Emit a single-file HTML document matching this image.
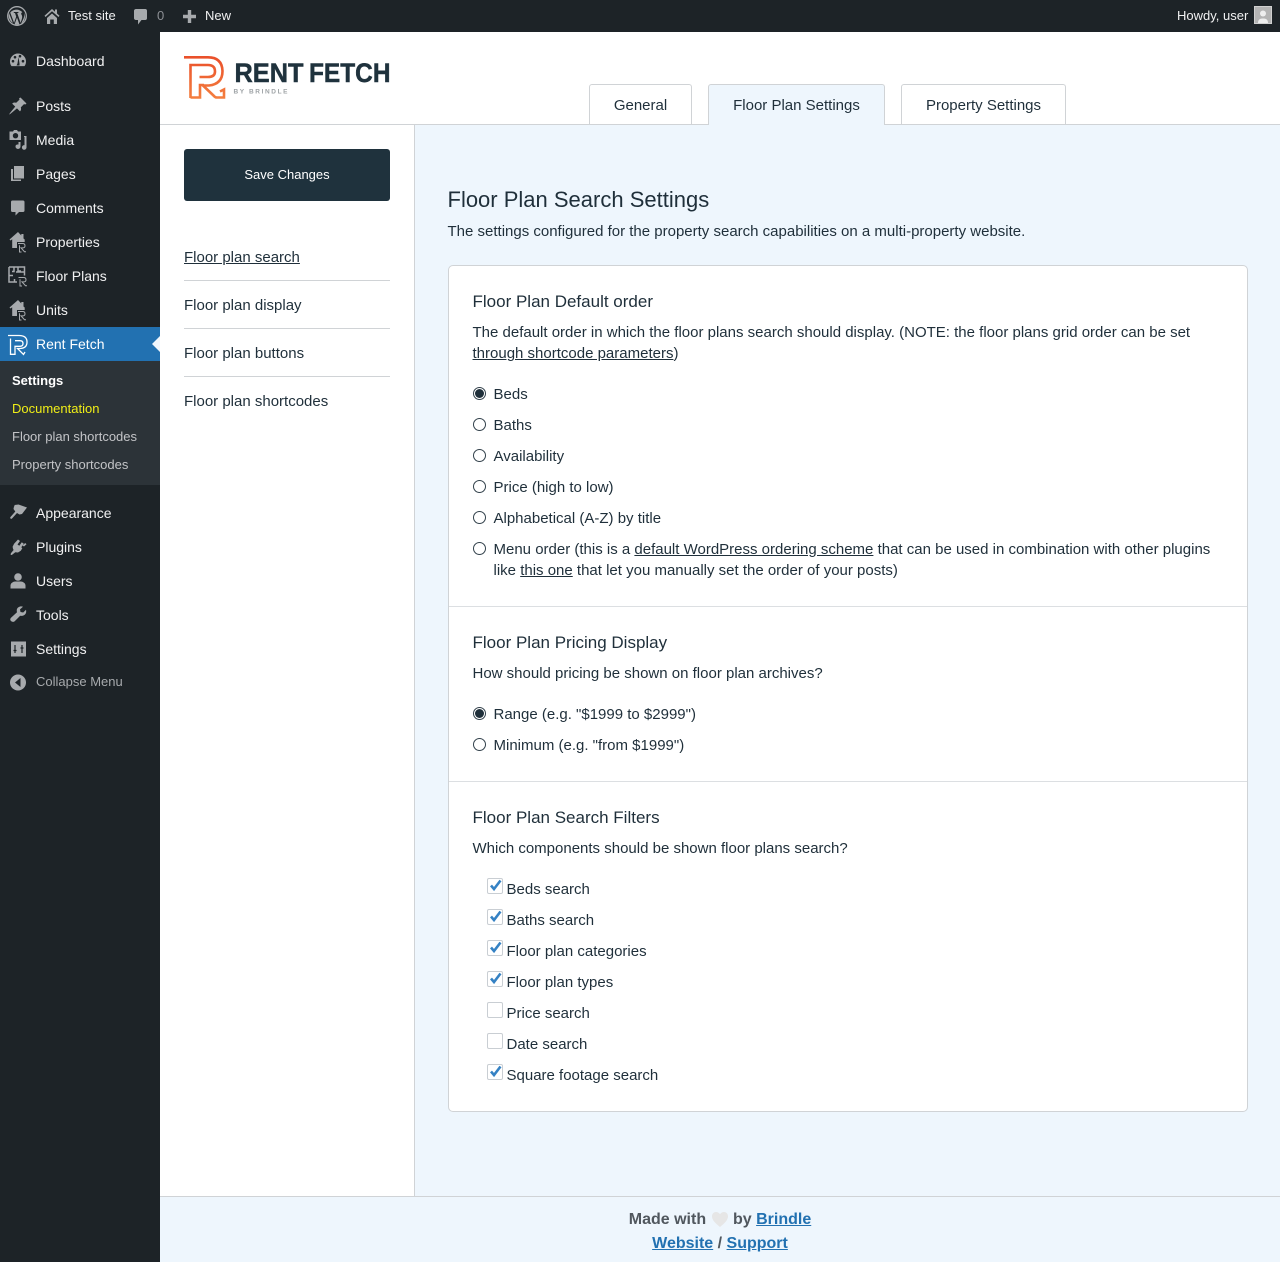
<!DOCTYPE html>
<html><head><meta charset="utf-8"><title>Rent Fetch</title>
<style>
*{box-sizing:border-box}
html,body{margin:0;padding:0}
body{width:1280px;height:1262px;position:relative;overflow:hidden;background:#eef6fd;font-family:"Liberation Sans",sans-serif;color:#1f2f3a}
a{color:inherit}
.t{position:absolute;white-space:nowrap;line-height:20px;height:20px}
.b{position:absolute}
.m{font-size:14px;color:#f0f0f1;left:36px}
.s{font-size:13px;left:12px;color:#c3c4c7}
.a{font-size:13px;color:#f0f0f1}
.c{font-size:15px;margin-top:1px;margin-left:-.5px}
.h{font-size:17px;margin-left:-.5px}
.nav{font-size:15px;left:184px;margin-top:1px}
.r{position:absolute;left:473px;width:13px;height:13px;border:1px solid #33424c;border-radius:50%;background:#fff}
.r.on::after{content:"";position:absolute;left:1px;top:1px;width:9px;height:9px;border-radius:50%;background:#1f2f3a}
.k{position:absolute;left:487px;width:16px;height:16px;border:1px solid #c9ced3;border-radius:2px;background:#fff}
.k svg{position:absolute;left:0;top:-1px}
.i{position:absolute;left:0;top:0}
.tab{position:absolute;top:84px;height:40px;border:1px solid #d0d3d6;border-bottom:0;border-radius:3px 3px 0 0;background:#fff;font-size:15px;line-height:41px;text-align:center;color:#1f2f3a}
</style></head><body>

<!-- main white regions -->
<div class="b" style="left:160px;top:32px;width:1120px;height:92px;background:#fff"></div>
<div class="b" style="left:160px;top:124px;width:1120px;height:1px;background:#d0d3d6"></div>
<div class="b" style="left:160px;top:125px;width:255px;height:1071px;background:#fff;border-right:1px solid #d0d3d6"></div>
<div class="b" style="left:160px;top:1196px;width:1120px;height:1px;background:#d0d3d6"></div>

<!-- sidebar + bars -->
<div class="b" style="left:0;top:0;width:1280px;height:32px;background:#1d2327"></div>
<div class="b" style="left:0;top:32px;width:160px;height:1230px;background:#1d2327"></div>
<div class="b" style="left:0;top:327px;width:160px;height:34px;background:#2271b1"></div>
<div class="b" style="left:0;top:361px;width:160px;height:124px;background:#2c3338"></div>
<div class="b" style="left:152px;top:336px;width:0;height:0;border:8px solid transparent;border-left:0;border-right-color:#f0f6fc"></div>

<svg class="i" width="160" height="700" viewBox="0 0 160 700" fill="#a7aaad">
 <!-- WP logo -->
 <circle cx="17" cy="16" r="9.3" fill="none" stroke="#a7aaad" stroke-width="1.3"/>
 <path d="M10.2 12.5l3.9 10.4 2.1-6.300-1.200-3.600h-1.200v-1h4.600v1h-1.200l3.400 9.900 1.200-3.800c.7-2.200.4-3.400-.4-4.600-.5-.8-.2-2 1-2.200-1.600-1.700-3.700-2.700-5.600-2.700-3 0-5.300 1.100-6.900 3.400z M17 17.500l-2.400 6.800c1.500.5 3.200.5 4.800 0z M24 12.500c.6 2.300.3 4.200-.6 6.300l-2.300 5c2.800-1.700 4.500-4.800 3.600-9z M9 13c-1 3.600.5 8 3.900 10z"/>
 <!-- home -->
 <path d="M52 9l-7.500 6.800 1 1.200 6.500-5.800 6.500 5.800 1-1.200-2.500-2.300V9.500h-2v2.200z"/>
 <path d="M52 13.500l-5 4.500v6h3.200v-4.500h3.600V24H57v-6z"/>
 <!-- comment topbar -->
 <path d="M136 9h9.300c1 0 1.700.7 1.700 1.700v7.600c0 1-.7 1.700-1.700 1.700h-3.800l-3.500 4.500V20H136c-1 0-2-.7-2-1.700v-7.600C134 9.700 135 9 136 9z"/>
 <!-- dashboard -->
 <path d="M18 53.500a8 8 0 0 0-8 8c0 1.700.5 3.300 1.500 4.600h13c1-1.300 1.500-2.900 1.500-4.600a8 8 0 0 0-8-8zM13 62.500a1.300 1.300 0 1 1 0-2.600 1.300 1.300 0 0 1 0 2.600zm2-4a1.300 1.300 0 1 1 0-2.600 1.300 1.300 0 0 1 0 2.600zm4.500 7h-3l1-2 1-6.500 1 6.500zm.5-8a1.300 1.300 0 1 1 0-2.600 1.300 1.300 0 0 1 0 2.600zm3 5a1.300 1.300 0 1 1 0-2.600 1.300 1.300 0 0 1 0 2.600z" fill-rule="evenodd"/>
 <!-- posts pin -->
 <path d="M20.500 97.500l6 6-1.200 1-1.300-.4-3.200 3.300c.6 1.700.2 3-.8 4l-3-3-6.500 5.300-1.500.9.900-1.500 5.300-6.500-3-3c1-1 2.300-1.400 4-.8l3.300-3.200-.4-1.300z"/>
 <!-- media -->
 <path d="M11 131.500h2l1-1.500h3l1 1.500h3v8.500H9.500v-8.500zM15.500 133a2.700 2.700 0 1 0 0 5.400 2.700 2.700 0 0 0 0-5.400z M24 137v-1h2.500v11.500a2.300 2.300 0 1 1-2-2.300V137zM15.500 146.500a2 2 0 0 1 1.800-2h1.200v-2.500h2v4.500a2.400 2.400 0 0 1-5 0z" fill-rule="evenodd"/>
 <!-- pages -->
 <path d="M14 166h10v12.500H14z M11 169h2v10.500h8v1.500H11z"/>
 <!-- comments -->
 <path d="M12.500 200.500h10.500c1 0 1.500.7 1.500 1.500v8.500c0 1-.6 1.500-1.500 1.500h-4l-3.500 3.500v-3.500h-3c-1 0-1.500-.6-1.500-1.500V202c0-.9.600-1.500 1.500-1.500z"/>
 <!-- properties -->
 <path d="M18 232l-8.500 7.500 1 1 1.700-1.300V248h6.800v-5h5.700v-3.500l-1.200-1V234h-2.200v1.500z"/>
 <rect x="17" y="242" width="11" height="11" fill="#1d2327"/>
 <path d="M18 243.500h4.500q2.500 0 2.500 2.200t-2.500 2.200h-1.500l3.500 3.800h1.500M19.500 245.300v6.700h2" fill="none" stroke="#a7aaad" stroke-width="1"/>
 <!-- floor plans -->
 <path d="M9 267h15.500v8.500M9 267v15h8M14 267v4.500h-2M18 267v4h3M9 275.500h4M14.500 282v-3M16 272h8" fill="none" stroke="#a7aaad" stroke-width="1.500"/>
 <rect x="18" y="276" width="11" height="11" fill="#1d2327"/>
 <path d="M18.500 277.500h5q2.500 0 2.500 2.200t-2.500 2.200h-1.500l3.500 3.800h1.500M20 279.300v6.700h2" fill="none" stroke="#a7aaad" stroke-width="1"/>
 <!-- units -->
 <path d="M18 300l-8.500 7.500 1 1 1.700-1.300V316h6.800v-5h5.700v-3.500l-1.200-1V302h-2.200v1.500z"/>
 <rect x="17" y="310" width="11" height="11" fill="#1d2327"/>
 <path d="M18 311.500h4.500q2.500 0 2.500 2.200t-2.500 2.200h-1.500l3.500 3.800h1.500M19.500 313.300v6.700h2" fill="none" stroke="#a7aaad" stroke-width="1"/>
 <!-- rent fetch -->
 <path d="M8 335.500h11q8 0 8 6.500t-7.500 6.500h-2l6 6 1.500-2.500M10.500 338.500v15.800h4.500v-8h5q3 0 3-2.800t-3-2.800h-5" fill="none" stroke="#fff" stroke-width="1.300"/>
 <!-- appearance -->
 <path d="M14.500 505l4-.5 8.500 3-5 6.500-2.500.5-2.500-1.500-5 5.500c-1 1-2.500-.5-1.500-1.500l4.800-5.500-1.800-2.500.5-2.500 .5-.5z"/>
 <!-- plugins -->
 <path d="M18 539.500l2 1.500-2.500 3.500 1.800 1.300 2.500-3.500 2 1.500-2.500 3.500 1 1-1.500 2.500-2.800 1.700-2.700-.2-3.500 2.700-1.200-.2.300-1.500 2.700-3.300-.6-1.200-.4-2 1.500-3z"/>
 <path d="M24 546.500l-1.500-1 2.700-2.500 1.300 1.200z"/>
 <!-- users -->
 <circle cx="18" cy="577" r="3.800"/>
 <path d="M10.500 588.500v-3c0-2.500 3-4 4.500-4h6c1.500 0 4.500 1.500 4.500 4v3z"/>
 <!-- tools -->
 <path d="M11 621c-1.300-1.300-.6-2.700 0-3.300l6-5.500c-.6-2.500 0-4.100 1.500-5 1.200-.8 3-1 4.500-.5l-3 2.700.5 2.600 2.700.5 2.800-2.800c.4 1.600.2 3.400-.8 4.600-1 1.300-3 2-5 1.400l-5.500 5.500c-1 .9-2.500.9-3.700-.2z"/>
 <!-- settings -->
 <path d="M11 641.500h15v15H11z"/>
 <path d="M15 645v8M22 645v8M13.500 650.500h3M20.500 648h3" fill="none" stroke="#1d2327" stroke-width="1.200"/>
 <!-- collapse -->
 <circle cx="18" cy="682.500" r="8"/>
 <path d="M20.500 678v9l-5.500-4.500z" fill="#1d2327"/>
</svg>

<!-- top bar plus -->
<svg class="b" style="left:180px;top:7px" width="20" height="18"><path d="M7.800 3h3.400v4.800H16v3.400h-4.800V16H7.800v-4.800H3V7.800h4.800z" fill="#a7aaad"/></svg>

<div class="t a" style="left:68px;top:6px">Test site</div>
<div class="t a" style="left:157px;top:6px;color:#8c8f94">0</div>
<div class="t a" style="left:205px;top:6px">New</div>
<div class="t a" style="left:1177px;top:6px">Howdy, user</div>
<div class="b" style="left:1254px;top:6px;width:18px;height:18px;background:#b4b4b4;border:1px solid #d0d0d0">
 <svg width="16" height="16" style="display:block"><circle cx="8" cy="6.500" r="3" fill="#eee"/><path d="M3 16c0-4 2.500-4.500 5-4.500s5 .5 5 4.500z" fill="#eee"/></svg>
</div>

<div class="t m" style="top:51px">Dashboard</div>
<div class="t m" style="top:96px">Posts</div>
<div class="t m" style="top:130px">Media</div>
<div class="t m" style="top:164px">Pages</div>
<div class="t m" style="top:198px">Comments</div>
<div class="t m" style="top:232px">Properties</div>
<div class="t m" style="top:266px">Floor Plans</div>
<div class="t m" style="top:300px">Units</div>
<div class="t m" style="top:334px;color:#fff">Rent Fetch</div>
<div class="t s" style="top:371px;color:#fff;font-weight:700">Settings</div>
<div class="t s" style="top:399px;color:#f0ee17">Documentation</div>
<div class="t s" style="top:427px">Floor plan shortcodes</div>
<div class="t s" style="top:455px">Property shortcodes</div>
<div class="t m" style="top:503px">Appearance</div>
<div class="t m" style="top:537px">Plugins</div>
<div class="t m" style="top:571px">Users</div>
<div class="t m" style="top:605px">Tools</div>
<div class="t m" style="top:639px">Settings</div>
<div class="t" style="left:36px;top:672px;font-size:13px;color:#a7aaad">Collapse Menu</div>

<!-- logo -->
<svg class="b" style="left:180px;top:50px" width="220" height="55" viewBox="180 50 220 55">
 <defs><linearGradient id="g" gradientUnits="userSpaceOnUse" x1="0" y1="56" x2="0" y2="99"><stop offset="0" stop-color="#ea4f2a"/><stop offset="1" stop-color="#f47f3f"/></linearGradient></defs>
 <g fill="none" stroke="url(#g)" stroke-width="2.600">
 <path d="M184 57.300H208Q222 57.300 222.500 71Q222.500 84 209 85.500H203L214 96Q215 97.500 217 97.500H224V89.500L220 91.500"/>
 <path d="M190.500 98V65H208Q215 65 215 71.500Q215 77 208 77H199.500"/>
 <path d="M190.500 97.500H200V85H204"/>
 </g>
 <text x="234.500" y="82" font-family="Liberation Sans" font-weight="700" font-size="27" fill="#1f323d" stroke="#1f323d" stroke-width=".5" textLength="69" lengthAdjust="spacingAndGlyphs">RENT</text>
 <text x="309" y="82" font-family="Liberation Sans" font-weight="700" font-size="27" fill="#1f323d" stroke="#1f323d" stroke-width=".5" textLength="81.500" lengthAdjust="spacingAndGlyphs">FETCH</text>
 <text x="233.500" y="93.500" font-family="Liberation Sans" font-weight="700" font-size="6.500" fill="#9ea3a6" textLength="54" lengthAdjust="spacing">BY BRINDLE</text>
</svg>

<!-- tabs -->
<div class="tab" style="left:589px;width:103px">General</div>
<div class="tab" style="left:708px;width:177px;height:41px;background:#eef6fd">Floor Plan Settings</div>
<div class="tab" style="left:901px;width:165px">Property Settings</div>

<!-- left nav -->
<div class="b" style="left:184px;top:149px;width:206px;height:52px;background:#1f323d;border-radius:3px;color:#fff;font-size:13px;line-height:52px;text-align:center">Save Changes</div>
<div class="t nav" style="top:247px"><a href="#" style="text-decoration:underline">Floor plan search</a></div>
<div class="b" style="left:184px;top:280px;width:206px;height:1px;background:#d0d3d6"></div>
<div class="t nav" style="top:295px">Floor plan display</div>
<div class="b" style="left:184px;top:328px;width:206px;height:1px;background:#d0d3d6"></div>
<div class="t nav" style="top:343px">Floor plan buttons</div>
<div class="b" style="left:184px;top:376px;width:206px;height:1px;background:#d0d3d6"></div>
<div class="t nav" style="top:391px">Floor plan shortcodes</div>

<!-- heading -->
<div class="t" style="left:447.500px;top:190px;font-size:22px">Floor Plan Search Settings</div>
<div class="t c" style="left:448px;top:221px">The settings configured for the property search capabilities on a multi-property website.</div>

<!-- card -->
<div class="b" style="left:448px;top:265px;width:800px;height:847px;background:#fff;border:1px solid #d0d3d6;border-radius:5px"></div>
<div class="b" style="left:449px;top:606px;width:798px;height:1px;background:#dcdfe2"></div>
<div class="b" style="left:449px;top:781px;width:798px;height:1px;background:#dcdfe2"></div>

<div class="t h" style="left:473px;top:292px">Floor Plan Default order</div>
<div class="t c" style="left:473px;top:322px">The default order in which the floor plans search should display. (NOTE: the floor plans grid order can be set</div>
<div class="t c" style="left:473px;top:343px"><a href="#" style="text-decoration:underline">through shortcode parameters</a>)</div>

<span class="r on" style="top:387px"></span><div class="t c" style="left:494px;top:384px">Beds</div>
<span class="r" style="top:418px"></span><div class="t c" style="left:494px;top:415px">Baths</div>
<span class="r" style="top:449px"></span><div class="t c" style="left:494px;top:446px">Availability</div>
<span class="r" style="top:480px"></span><div class="t c" style="left:494px;top:477px">Price (high to low)</div>
<span class="r" style="top:511px"></span><div class="t c" style="left:494px;top:508px">Alphabetical (A-Z) by title</div>
<span class="r" style="top:542px"></span><div class="t c" style="left:494px;top:539px">Menu order (this is a <a href="#">default WordPress ordering scheme</a> that can be used in combination with other plugins</div>
<div class="t c" style="left:494px;top:560px">like <a href="#">this one</a> that let you manually set the order of your posts)</div>

<div class="t h" style="left:473px;top:633px">Floor Plan Pricing Display</div>
<div class="t c" style="left:473px;top:663px">How should pricing be shown on floor plan archives?</div>
<span class="r on" style="top:707px"></span><div class="t c" style="left:494px;top:704px">Range (e.g. "$1999 to $2999")</div>
<span class="r" style="top:738px"></span><div class="t c" style="left:494px;top:735px">Minimum (e.g. "from $1999")</div>

<div class="t h" style="left:473px;top:808px">Floor Plan Search Filters</div>
<div class="t c" style="left:473px;top:838px">Which components should be shown floor plans search?</div>

<span class="k" style="top:878px"><svg width="16" height="16"><path d="M3 7.500l3 3.500L12.500 2.500" fill="none" stroke="#3582c4" stroke-width="2.600"/></svg></span><div class="t c" style="left:507px;top:879px">Beds search</div>
<span class="k" style="top:909px"><svg width="16" height="16"><path d="M3 7.500l3 3.500L12.500 2.500" fill="none" stroke="#3582c4" stroke-width="2.600"/></svg></span><div class="t c" style="left:507px;top:910px">Baths search</div>
<span class="k" style="top:940px"><svg width="16" height="16"><path d="M3 7.500l3 3.500L12.500 2.500" fill="none" stroke="#3582c4" stroke-width="2.600"/></svg></span><div class="t c" style="left:507px;top:941px">Floor plan categories</div>
<span class="k" style="top:971px"><svg width="16" height="16"><path d="M3 7.500l3 3.500L12.500 2.500" fill="none" stroke="#3582c4" stroke-width="2.600"/></svg></span><div class="t c" style="left:507px;top:972px">Floor plan types</div>
<span class="k" style="top:1002px"></span><div class="t c" style="left:507px;top:1003px">Price search</div>
<span class="k" style="top:1033px"></span><div class="t c" style="left:507px;top:1034px">Date search</div>
<span class="k" style="top:1064px"><svg width="16" height="16"><path d="M3 7.500l3 3.500L12.500 2.500" fill="none" stroke="#3582c4" stroke-width="2.600"/></svg></span><div class="t c" style="left:507px;top:1065px">Square footage search</div>

<!-- footer -->
<div class="t" style="left:160px;width:1120px;top:1210px;text-align:center;font-size:16px;font-weight:700;color:#50575e">Made with <svg width="16" height="15" viewBox="1 1 16 15" style="vertical-align:-3px;margin:0 1px"><path d="M9 16C4 12 1 9 1 5.300 1 2.500 3 1 5 1c1.700 0 3 .8 4 2.200C10 1.800 11.300 1 13 1c2 0 4 1.500 4 4.300C17 9 14 12 9 16z" fill="#e6e6e6"/></svg> by <a href="#" style="color:#2271b1">Brindle</a></div>
<div class="t" style="left:160px;width:1120px;top:1234px;text-align:center;font-size:16px;font-weight:700;color:#50575e"><a href="#" style="color:#2271b1">Website</a> / <a href="#" style="color:#2271b1">Support</a></div>

</body></html>
